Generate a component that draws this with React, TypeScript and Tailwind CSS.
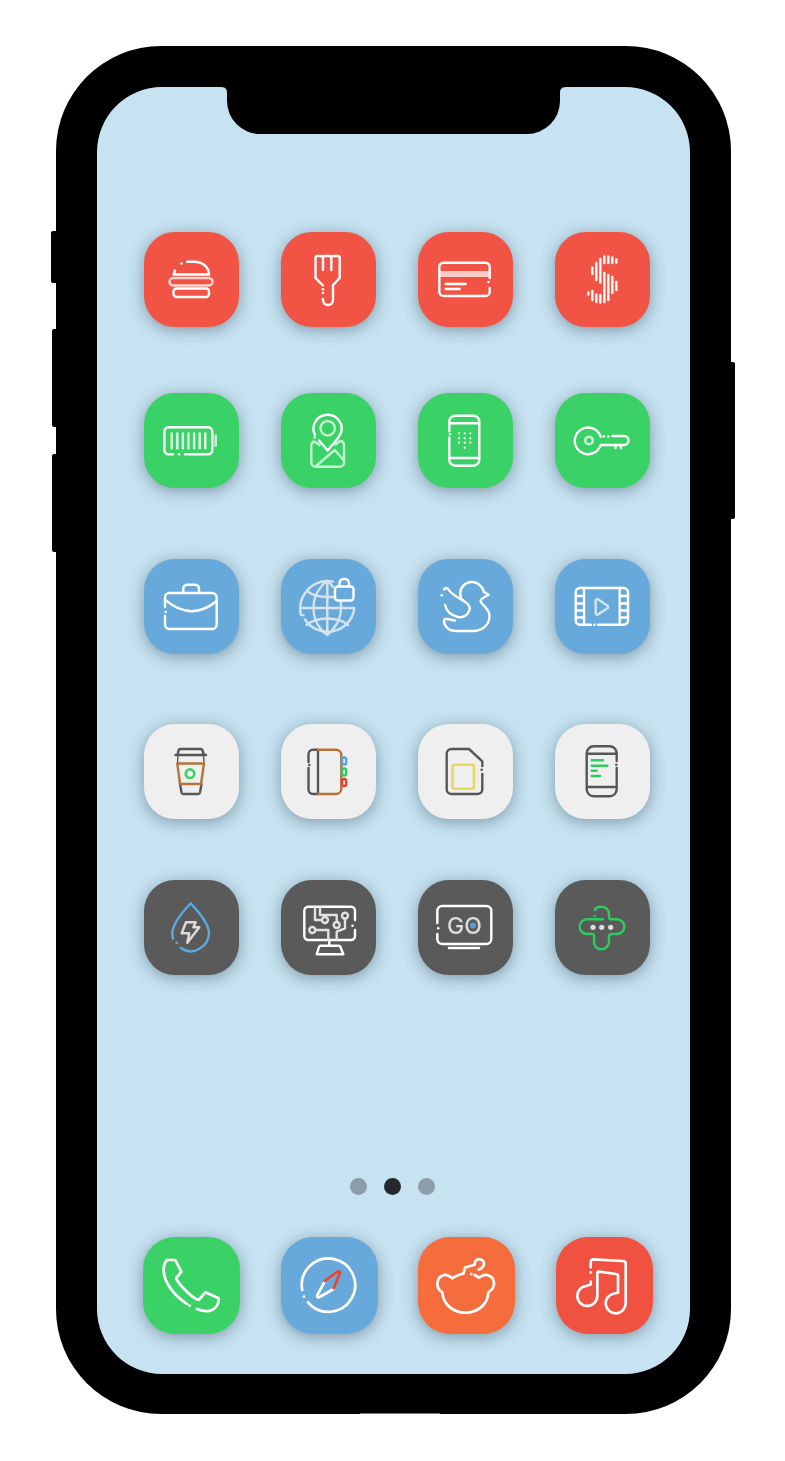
import React from "react";

const Svg = ({ size = 95, sw = 2.4, stroke = "#fff", children }: { size?: number; sw?: number; stroke?: string; children: React.ReactNode }) => (
  <svg viewBox={`0 0 ${size} ${size}`} className="block h-full w-full blur-[0.35px]" fill="none" stroke={stroke} strokeWidth={sw} strokeLinecap="round" strokeLinejoin="round">
    {children}
  </svg>
);

const Dot = ({ x, y, r = 1.3, c = "#fff" }: { x: number; y: number; r?: number; c?: string }) => <circle cx={x} cy={y} r={r} fill={c} stroke="none" />;

const G = "#565656";

const bars: [number, number, number][] = [
  [33.3, 60.5, 62.5], [37.3, 35.5, 42], [37.3, 59, 68], [41.3, 31, 48], [41.3, 62.5, 70], [45.3, 27, 50.5], [45.3, 63, 70.5],
  [49.3, 24.5, 31], [49.3, 41, 70], [53.3, 24.5, 31], [53.3, 43, 68], [57.3, 25.5, 31], [57.3, 45, 61], [61.3, 27.5, 30.5], [61.3, 50, 58],
];

const icons: Record<string, React.ReactNode> = {
  burger: (
    <Svg>
      <path d="M31 38.5 29.5 42.5H65C65 35 58.5 29.7 50 29.7H43" />
      <Dot x={37.5} y={31.5} />
      <rect x="25.5" y="46" width="43" height="7.5" rx="3.7" strokeOpacity=".75" />
      <rect x="29.5" y="56.5" width="35.5" height="8.5" rx="3" />
    </Svg>
  ),
  fork: (
    <Svg>
      <path d="M34.5 46V26Q34.5 24 36.5 24H40Q42 24 42 26V38M42 26Q42 24 44 24H48.3Q50.3 24 50.3 26V38M50.3 26Q50.3 24 52.3 24H56.7Q58.7 24 58.7 26V46L52 53V68A5 5 0 0 1 42 68V67M34.5 46 42 53.5" />
      <Dot x={42} y={57.3} /><Dot x={42} y={61} />
    </Svg>
  ),
  card: (
    <Svg>
      <rect x="22" y="39" width="49" height="6" fill="#fff" fillOpacity=".7" stroke="none" />
      <path d="M71.7 46V35A4.3 4.3 0 0 0 67.4 30.7H25.6A4.3 4.3 0 0 0 21.3 35V59.7A4.3 4.3 0 0 0 25.6 64H67.4A4.3 4.3 0 0 0 71.7 59.7V56" />
      <path d="M27.7 52H47.7M27.7 57H41.7" />
      <Dot x={70.5} y={50} />
    </Svg>
  ),
  dollar: (
    <Svg sw={2.4}>
      {bars.map(([x, a, b], i) => <path key={i} d={`M${x} ${a}V${b}`} />)}
    </Svg>
  ),
  battery: (
    <Svg>
      <path d="M41 61.3H64A4.3 4.3 0 0 0 68.3 57V38.6A4.3 4.3 0 0 0 64 34.3H24.6A4.3 4.3 0 0 0 20.3 38.6V57A4.3 4.3 0 0 0 24.6 61.3H29" />
      <Dot x={35} y={61.3} />
      <path d="M71.7 42.7V52.7" strokeOpacity=".7" strokeWidth="2.6" />
      <g strokeOpacity=".85">
        {[27.7, 33.3, 38.9, 44.5, 50.1, 55.7, 61.3].map((x) => <path key={x} d={`M${x} 40.5V55.3`} />)}
      </g>
    </Svg>
  ),
  map: (
    <Svg>
      <g strokeOpacity=".7">
        <circle cx="46.7" cy="35.3" r="7.2" />
        <path d="M38.5 52 33.5 48.5A4 4 0 0 0 30.3 52V69.5A4.2 4.2 0 0 0 34.5 73.7H58.8A4.2 4.2 0 0 0 63 69.5V51.5A4 4 0 0 0 59 48L54.5 51.5M35 73 53.7 57 62.5 67" />
      </g>
      <path d="M34 42A14 14 0 0 1 46.7 21.7 14 14 0 0 1 60.7 35.7C60.7 41 58 44.5 46.7 57.5L38 47.5" />
      <Dot x={33.5} y={44.5} />
    </Svg>
  ),
  phone: (
    <Svg>
      <path d="M31.3 38V28.7A6 6 0 0 1 37.3 22.7H55.3A6 6 0 0 1 61.3 28.7V66.7A6 6 0 0 1 55.3 72.7H37.3A6 6 0 0 1 31.3 66.7V44.5M31.5 30.3H61M31.5 65H61" />
      <Dot x={32} y={41} />
      {[41, 46.7, 52.3].flatMap((x) => [40.3, 45.3, 49.7].map((y) => <Dot key={`${x}-${y}`} x={x} y={y} r={1.1} />))}
      <Dot x={46.7} y={54.7} r={1.1} />
    </Svg>
  ),
  key: (
    <Svg>
      <path d="M45.7 43.7A13.3 13.3 0 1 0 45.7 52H60.5V55M60.5 52H66V55M66 52H69A4.5 4.5 0 0 0 69 43H57.3" />
      <circle cx="34" cy="47.5" r="3.8" strokeOpacity=".75" />
      <Dot x={53.3} y={43.5} /><Dot x={48.8} y={43.5} />
    </Svg>
  ),
  case: (
    <Svg>
      <path d="M39.3 34V29.5A3.8 3.8 0 0 1 43 25.7H51.3A3.8 3.8 0 0 1 55 29.5V34" />
      <path d="M21 48V38.5A4.5 4.5 0 0 1 25.5 34H68.2A4.5 4.5 0 0 1 72.7 38.5V65.5A4.5 4.5 0 0 1 68.2 70H25.5A4.5 4.5 0 0 1 21 65.5V57" />
      <path d="M21 40.7Q47 63 72.7 42" />
      <Dot x={21.7} y={53} />
    </Svg>
  ),
  globe: (
    <Svg sw={2.4}>
      <g stroke="#d6e3ee">
        <path d="M52 22.6A27 27 0 0 0 23.5 35C19 42 18.5 50 20 56M24 60.5A27 27 0 0 0 73.2 50.5" />
        <path d="M46.3 22V76M19.5 49H73M46.3 22C38 28 32.5 38 32.5 49S38 70 46.3 76M46.3 76C54 70 60 60 60 49V42M46.3 22C49 24 51 26 52 28" />
        <path d="M26 32C31 36 38 38 46.3 38H52M25.5 66C31 61.5 38 59.5 46.3 59.5S62 61.5 67 66" />
      </g>
      <Dot x={22.3} y={56.3} c="#d6e3ee" />
      <rect x="54" y="27.5" width="18.5" height="14" rx="3" />
      <path d="M58.5 27.5V24A4.8 4.8 0 0 1 68 24V27.5" />
    </Svg>
  ),
  duck: (
    <Svg>
      <path d="M26 30.5C27 28.5 29 28.5 30 30 33 35 38 37.5 45 41.5 50 44.5 52.5 47.5 51.5 51 50 56 45.5 59 40 58 33 56.5 28.5 52 27 46" />
      <path d="M45 42A11.5 11.5 0 0 1 62.5 27Q65.5 29.5 66 33L70.5 35.8 65.8 38.5Q63 40 62.5 42C64 47 71.5 49 71.5 57 71.5 66 64 72 55 72H38C31 72 26 67.5 26 62 26 60 27.5 59.7 29 60L37 61.5" />
      <Dot x={23.7} y={36.3} />
    </Svg>
  ),
  film: (
    <Svg>
      <path d="M43 65.7H68.8A4.2 4.2 0 0 0 73 61.5V33.2A4.2 4.2 0 0 0 68.8 29H24.9A4.2 4.2 0 0 0 20.7 33.2V61.5A4.2 4.2 0 0 0 24.9 65.7H36" />
      <path d="M29 29V65.7M64.7 29V65.7M21 37H29M21 44.5H29M21 51.5H29M21 58.5H29M64.7 37H73M64.7 44.5H73M64.7 51.5H73M64.7 58.5H73" />
      <Dot x={39.5} y={65.7} />
      <path d="M40.7 41.5A1.5 1.5 0 0 1 43 40.3L52.5 46.7A1.5 1.5 0 0 1 52.5 49.3L43 55.5A1.5 1.5 0 0 1 40.7 54.2Z" strokeOpacity=".7" />
    </Svg>
  ),
  cup: (
    <Svg stroke={G}>
      <path d="M31.5 31H62M33.5 31 34.5 26.5A2 2 0 0 1 36.5 25H56.5A2 2 0 0 1 58.5 26.5L60 31" />
      <path d="M36 60 37.5 68.5A2 2 0 0 0 39.5 70H54A2 2 0 0 0 56 68.5L57.5 60" />
      <path d="M34 31 33.5 39.5M59.5 31 60 39.5" strokeWidth="1.4" />
      <path d="M33.3 39.5H60L57 60H36Z" stroke="#b5733a" />
      <circle cx="46" cy="49.7" r="4.3" stroke="#3fcf66" strokeWidth="2.6" />
    </Svg>
  ),
  book: (
    <Svg stroke={G}>
      <path d="M37 25.7H32A4.5 4.5 0 0 0 27.5 30.2V38M27.5 44V65.5A4.5 4.5 0 0 0 32 70H37V25.7" />
      <Dot x={28.3} y={41} c={G} />
      <path d="M37 25.7H55A5.3 5.3 0 0 1 60.3 31V64.7A5.3 5.3 0 0 1 55 70H37" stroke="#b5733a" />
      <rect x="61" y="33.5" width="4.2" height="7" rx="2" stroke="#4ea5e0" />
      <rect x="61" y="44.5" width="4.2" height="7" rx="2" stroke="#2ecc5f" />
      <rect x="61" y="55" width="4.2" height="7" rx="2" stroke="#e9402f" />
    </Svg>
  ),
  sim: (
    <Svg stroke={G}>
      <path d="M64.3 42V37.3L51 25H33.5A4.8 4.8 0 0 0 28.7 29.8V65.2A4.8 4.8 0 0 0 33.5 70H59.5A4.8 4.8 0 0 0 64.3 65.2V50" />
      <Dot x={63.7} y={45.7} c={G} />
      <rect x="34.5" y="40.7" width="21.5" height="24" rx="2" stroke="#e8d957" strokeWidth="2.6" />
    </Svg>
  ),
  code: (
    <Svg stroke={G}>
      <path d="M61.7 37V29.3A7 7 0 0 0 54.7 22.3H38.7A7 7 0 0 0 31.7 29.3V65.3A7 7 0 0 0 38.7 72.3H54.7A7 7 0 0 0 61.7 65.3V44M32 29.7H61.5M32 63H61.5" />
      <Dot x={61.3} y={40.7} c={G} />
      <path d="M36.7 36.3H48M36.7 41.7H52.3M36.7 46.7H41.7M36.7 52H45" stroke="#2ecc5f" strokeWidth="2.4" />
    </Svg>
  ),
  drop: (
    <Svg stroke="#5aa9e0">
      <path d="M36.7 67.7C43 72.5 50 72 55 69 61 65.5 65 60 65 53.5 65 44 55 32 46.7 23.3 38.5 32 28.3 44 28.3 53.5 28.3 55 28.5 57 29 58.5" />
      <Dot x={32.7} y={62.7} c="#5aa9e0" />
      <path d="M42 42.3H51.7L49.3 47.3H55.3L43.3 62.7 45.3 53.3H37.7Z" stroke="#ddd" />
    </Svg>
  ),
  circuit: (
    <Svg>
      <path d="M74 40V30.7A4 4 0 0 0 70 26.7H27.3A4 4 0 0 0 23.3 30.7V56A4 4 0 0 0 27.3 60H70A4 4 0 0 0 74 56V50" />
      <Dot x={71.5} y={45.7} />
      <path d="M48.3 60V65.7M39 65.7H57.5A2 2 0 0 1 59.5 67L62.3 74.3H35.7L38 67A2 2 0 0 1 39 65.7Z" />
      <g stroke="#e2e2e2">
        <path d="M34 27.7V40H41M39 27.7V35H55.7V42M64 38.7V48.3L55.7 51.7V59.5M34.3 50H47.3V59.5" />
        <circle cx="44" cy="40" r="3" /><circle cx="55.7" cy="45" r="3" /><circle cx="64" cy="35.7" r="3" /><circle cx="31.3" cy="50" r="3" />
      </g>
    </Svg>
  ),
  go: (
    <Svg>
      <path d="M19.3 43V31A5 5 0 0 1 24.3 26H68.3A5 5 0 0 1 73.3 31V59A5 5 0 0 1 68.3 64H24.3A5 5 0 0 1 19.3 59V54M31 68H61" />
      <Dot x={20.3} y={48.3} />
      <text x="46.5" y="54" textAnchor="middle" fontSize="23" fontFamily="Inter, sans-serif" fontWeight="500" fill="#dcdcdc" stroke="none">GO</text>
      <Dot x={55} y={45.5} r={3} c="#5b9bd5" />
    </Svg>
  ),
  cross: (
    <Svg stroke="#2ecc5f" sw={2.4}>
      <path d="M40 30C41 27 44 26.7 46 26.7 51 26.7 54 30 54 34V37C54 38.5 55 39.3 57 39.3H62A7.3 7.3 0 0 1 62 54H57C55 54 54 55 54 57V61.7C54 66 50.5 69.3 46 69.3 42 69.3 39 66 39 61.7V58C39 55.5 39.5 54 37 54H32A7.3 7.3 0 0 1 32 39.3H48" />
      <Dot x={39.7} y={36} c="#2ecc5f" />
      <Dot x={38} y={47.3} r={2.6} c="#ddd" /><Dot x={46.7} y={47.3} r={2.6} c="#ddd" /><Dot x={55.7} y={47.3} r={2.6} c="#ddd" />
    </Svg>
  ),
  call: (
    <Svg size={97} sw={2.7}>
      <path d="M44 67C32 59 20.7 46 20.7 33 20.7 29 21.5 25.5 24 23H32.3L38.3 34.7 33 41.3C36 47 48 61 55.7 63L62.3 55.3 75.7 61.3C76 67 72.5 71.3 69 73 64 75.5 59 74 54 72" />
      <Dot x={46.7} y={68.7} r={1.4} />
    </Svg>
  ),
  compass: (
    <Svg size={97} sw={2.7}>
      <path d="M21.2 53A26.7 26.7 0 1 1 27 65.3" />
      <Dot x={23} y={59.7} r={1.4} />
      <path d="M43.7 44.7 36.3 58A1.5 1.5 0 0 0 38.5 60L52.7 52" />
      <path d="M43.7 44 56 35A1.5 1.5 0 0 1 58.5 37L52.7 51.3" stroke="#ef4228" />
    </Svg>
  ),
  bear: (
    <Svg size={97} sw={2.7}>
      <path d="M56.7 38 61 40.7C63 39 66 37.5 69.3 38 77 40 79 50 70.3 55.3 70 67 60 75.7 47.3 75.7 35 75.7 25 67 24.3 55.3 17 51 18 40 26 38 29 37.5 32 39.5 34.3 41.3 38 38.5 41.5 37.5 45.5 36.5L47 30.5 56 28" />
      <path d="M60.5 32.5C64 31.5 66.5 28.5 66 26 65.5 22.5 60.5 21 58 23.5 57 24.5 56.7 26 56.7 27.5" />
      <Dot x={53.3} y={37} r={1.4} />
    </Svg>
  ),
  music: (
    <Svg size={97} sw={2.7}>
      <path d="M34.7 30.3V25A2.7 2.7 0 0 1 37.4 22.3L67 24A2.7 2.7 0 0 1 69.7 26.7V66.3A10 10 0 1 1 58 56.5L62 55.7V39A2 2 0 0 0 60 37L43 34.7A1.7 1.7 0 0 0 41.3 36.4V59A10 10 0 1 1 30 49L34.7 47.5V44.5" />
      <Dot x={34.7} y={35.5} r={1.4} />
    </Svg>
  ),
};

const rows: { bg: string; mt: string; items: string[] }[] = [
  { bg: "bg-[#f15444]", mt: "mt-[145px]", items: ["burger", "fork", "card", "dollar"] },
  { bg: "bg-[#3ad267]", mt: "mt-[66px]", items: ["battery", "map", "phone", "key"] },
  { bg: "bg-[#68a9dc]", mt: "mt-[71px]", items: ["case", "globe", "duck", "film"] },
  { bg: "bg-[#efefef]", mt: "mt-[70px]", items: ["cup", "book", "sim", "code"] },
  { bg: "bg-[#5a5a5a]", mt: "mt-[61px]", items: ["drop", "circuit", "go", "cross"] },
];

const dock = [
  { bg: "bg-[#3ad267]", icon: "call" },
  { bg: "bg-[#68a9dc]", icon: "compass" },
  { bg: "bg-[#f66d3d]", icon: "bear" },
  { bg: "bg-[#f05141]", icon: "music" },
];

export default function App() {
  return (
    <div className="h-[1461px] w-[785px] overflow-hidden bg-white pl-[56px] pt-[46px]">
      <div className="relative h-[1368px] w-[675px] rounded-[105px] bg-black p-[41px]">
        <div className="absolute left-[-5px] top-[185px] h-[52px] w-[6px] rounded-l-[2px] bg-black" />
        <div className="absolute left-[-4px] top-[283px] h-[98px] w-[5px] rounded-l-[2px] bg-black" />
        <div className="absolute left-[-4px] top-[408px] h-[98px] w-[5px] rounded-l-[2px] bg-black" />
        <div className="absolute right-[-4px] top-[316px] h-[157px] w-[5px] rounded-r-[2px] bg-black" />
        <div className="absolute bottom-0 left-[304px] h-px w-[80px] bg-[#777]" />
        <div className="relative h-[1287px] w-[593px] overflow-hidden rounded-[65px] bg-[#c7e3f1]">
          <svg className="absolute left-[124px] top-0 h-[47px] w-[345px]" viewBox="0 0 345 47">
            <path d="M0 0C5 0 6 3 6 6V14A33 33 0 0 0 39 47H306A33 33 0 0 0 339 14V6C339 3 340 0 345 0Z" fill="#000" />
          </svg>
          {rows.map((r) => (
            <div key={r.items[0]} className={`${r.mt} flex gap-x-[42px] pl-[47px]`}>
              {r.items.map((n) => (
                <div key={n} className={`h-[95px] w-[95px] rounded-[31px] shadow-[0_3px_16px_rgba(40,60,80,0.45)] ${r.bg}`}>
                  {icons[n]}
                </div>
              ))}
            </div>
          ))}
          <div className="mt-[203px] flex justify-center gap-[17px] pr-[3px]">
            <div className="h-[17px] w-[17px] rounded-full bg-[#8c9daa]" />
            <div className="h-[17px] w-[17px] rounded-full bg-[#25292c]" />
            <div className="h-[17px] w-[17px] rounded-full bg-[#8c9daa]" />
          </div>
          <div className="mt-[42px] flex gap-x-[40.5px] pl-[46px]">
            {dock.map((d) => (
              <div key={d.icon} className={`h-[97px] w-[97px] rounded-[32px] shadow-[0_3px_16px_rgba(40,60,80,0.45)] ${d.bg}`}>
                {icons[d.icon]}
              </div>
            ))}
          </div>
        </div>
      </div>
    </div>
  );
}
